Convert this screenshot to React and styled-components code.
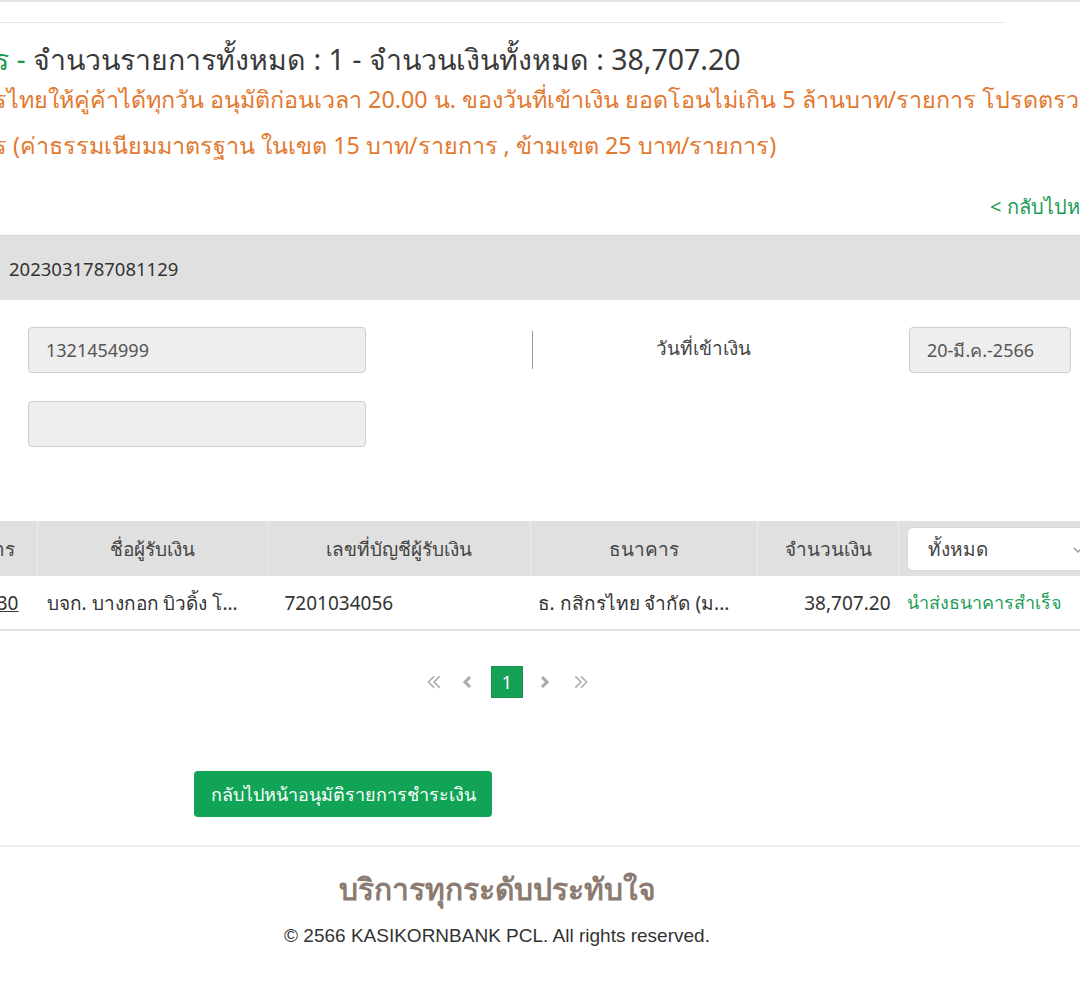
import React from "react";
import styled, { createGlobalStyle } from "styled-components";

const GlobalStyle = createGlobalStyle`
  html, body {
    margin: 0;
    padding: 0;
    background: #ffffff;
  }
  body {
    font-family: "Noto Sans", "Liberation Sans", sans-serif;
    color: #333333;
  }
`;

const Viewport = styled.div`
  width: 1080px;
  height: 982px;
  overflow: hidden;
  background: #fff;
  display: flex;
  flex-direction: column;
`;

const TopRule = styled.div`
  height: 2px;
  background: #e4e4e4;
  flex-shrink: 0;
`;

const HeaderRule = styled.div`
  width: 1005px;
  height: 1px;
  margin-top: 20px;
  background: #e6e6e6;
  flex-shrink: 0;
`;

const Title = styled.h1`
  margin: 19px 0 0 -6px;
  font-size: 28.5px;
  font-weight: 400;
  line-height: 34px;
  white-space: nowrap;
  color: #3a3a3a;
`;

const Green = styled.span`
  color: #1d9c56;
`;

const Notice = styled.p`
  margin: 0 0 0 -6px;
  font-size: 23.3px;
  font-weight: 400;
  line-height: 46px;
  white-space: nowrap;
  color: #e2792f;
`;

const BackLink = styled.a`
  display: block;
  margin: 25px 0 0 990px;
  font-size: 20px;
  line-height: 28px;
  color: #1d9c56;
  white-space: nowrap;
  text-decoration: none;
`;

const RefBar = styled.div`
  margin-top: 14px;
  height: 64px;
  display: flex;
  align-items: center;
  padding-left: 9px;
  background: #e0e0e0;
  border-top: 1px solid #d6d6d6;
  font-size: 18.5px;
  color: #333;
  flex-shrink: 0;
`;

const FormGrid = styled.div`
  margin-top: 27px;
  display: grid;
  grid-template-columns: 28px 338px 166px 1px 376px 162px;
  grid-auto-rows: 46px;
  row-gap: 28px;
  align-items: center;
`;

const Field = styled.div`
  grid-column: ${(p) => p.$col};
  height: 46px;
  box-sizing: border-box;
  display: flex;
  align-items: center;
  padding-left: 17px;
  background: #eeeeee;
  border: 1px solid #cfcfcf;
  border-radius: 4px;
  font-size: 18px;
  color: #555;
  white-space: nowrap;
`;

const Divider = styled.div`
  grid-column: 4;
  height: 38px;
  background: #9a9a9a;
`;

const FieldLabel = styled.div`
  grid-column: 5;
  padding-right: 36px;
  text-align: center;
  font-size: 19px;
  font-weight: 400;
  color: #444;
  margin-top: -4px;
`;

const Table = styled.table`
  margin: 74px 0 0 -60px;
  border-collapse: collapse;
  table-layout: fixed;
  width: 1220px;
  font-size: 19px;
`;

const HeadCell = styled.th`
  height: 55px;
  padding: ${(p) => p.$pad || "0 8px"};
  background: #e0e0e0;
  font-weight: 400;
  color: #444;
  text-align: ${(p) => p.$align || "center"};
  border-left: 1px solid ${(p) => (p.$first ? "transparent" : "#ebebeb")};
  white-space: nowrap;
  overflow: hidden;
`;

const Cell = styled.td`
  height: 53px;
  padding: ${(p) => p.$pad || "0 8px"};
  border-bottom: 2px solid #e3e3e3;
  text-align: ${(p) => p.$align || "left"};
  font-size: ${(p) => (p.$green ? "18px" : "inherit")};
  color: ${(p) => (p.$green ? "#1d9c56" : "#333")};
  white-space: nowrap;
  overflow: hidden;
`;

const RowLink = styled.a`
  color: #333;
  text-decoration: underline;
`;

const Select = styled.div`
  height: 44px;
  box-sizing: border-box;
  display: flex;
  align-items: center;
  justify-content: space-between;
  padding: 0 12px 0 20px;
  background: #fff;
  border: 1px solid #d8d8d8;
  border-radius: 6px;
  color: #444;
  text-align: left;
`;

const Pager = styled.nav`
  margin-top: 35px;
  display: flex;
  align-items: center;
  padding-left: 423px;
`;

const PageArrow = styled.span`
  width: ${(p) => p.$w}px;
  height: 32px;
  display: flex;
  align-items: center;
  justify-content: center;
  color: #aaaaaa;
`;

const PageCurrent = styled.span`
  width: 32px;
  height: 32px;
  box-sizing: border-box;
  display: flex;
  align-items: center;
  justify-content: center;
  background: #15a257;
  border: 1px solid #1a8f4d;
  color: #fff;
  font-size: 18px;
`;

const ActionButton = styled.button`
  margin: 73px 0 0 194px;
  width: 298px;
  height: 46px;
  border: none;
  border-radius: 4px;
  background: #12a456;
  color: #fff;
  font-family: inherit;
  font-size: 18px;
  cursor: pointer;
  align-self: flex-start;
`;

const FooterRule = styled.div`
  margin-top: 28px;
  height: 2px;
  background: #eeeeee;
  flex-shrink: 0;
`;

const Footer = styled.footer`
  width: 994px;
  display: flex;
  flex-direction: column;
  align-items: center;
`;

const Slogan = styled.div`
  margin-top: 21px;
  font-size: 30px;
  font-weight: 700;
  line-height: 42px;
  color: #8b7b71;
`;

const Copyright = styled.div`
  margin-top: 15px;
  font-family: "Liberation Sans", Arial, sans-serif;
  font-size: 19px;
  color: #333;
`;

const Chevron = ({ dir = "left", double = false }) => {
  if (double) {
    const d =
      dir === "left"
        ? "M8 3 L3 8 L8 13 M13 3 L8 8 L13 13"
        : "M3 3 L8 8 L3 13 M8 3 L13 8 L8 13";
    return (
      <svg width="18" height="18" viewBox="0 0 16 16" fill="none" stroke="currentColor" strokeWidth="1.3">
        <path d={d} />
      </svg>
    );
  }
  const single = dir === "left" ? "M10 3 L5 8 L10 13" : "M6 3 L11 8 L6 13";
  return (
    <svg width="16" height="20" viewBox="0 0 16 16" fill="none" stroke="currentColor" strokeWidth="3">
      <path d={single} />
    </svg>
  );
};

const Caret = () => (
  <svg width="12" height="12" viewBox="0 0 12 12" fill="none" stroke="#999" strokeWidth="1.5">
    <path d="M2 4 L6 8 L10 4" />
  </svg>
);

export default function App() {
  return (
    <Viewport>
      <GlobalStyle />
      <TopRule />
      <HeaderRule />
      <Title>
        <Green>ร - </Green>จำนวนรายการทั้งหมด : 1 - จำนวนเงินทั้งหมด : 38,707.20
      </Title>
      <Notice>
        รไทยให้คู่ค้าได้ทุกวัน อนุมัติก่อนเวลา 20.00 น. ของวันที่เข้าเงิน ยอดโอนไม่เกิน 5 ล้านบาท/รายการ โปรดตรวจสอบ
      </Notice>
      <Notice>ร (ค่าธรรมเนียมมาตรฐาน ในเขต 15 บาท/รายการ , ข้ามเขต 25 บาท/รายการ)</Notice>
      <BackLink href="#">&lt; กลับไปหน้าก่อนหน้า</BackLink>
      <RefBar>2023031787081129</RefBar>
      <FormGrid>
        <Field $col={2}>1321454999</Field>
        <Divider />
        <FieldLabel>วันที่เข้าเงิน</FieldLabel>
        <Field $col={6}>20-มี.ค.-2566</Field>
        <Field $col={2} />
      </FormGrid>
      <Table>
        <colgroup>
          <col style={{ width: 97 }} />
          <col style={{ width: 230 }} />
          <col style={{ width: 263 }} />
          <col style={{ width: 227 }} />
          <col style={{ width: 141 }} />
          <col style={{ width: 262 }} />
        </colgroup>
        <thead>
          <tr>
            <HeadCell $first $align="right" $pad="0 22px 0 0">รายการ</HeadCell>
            <HeadCell>ชื่อผู้รับเงิน</HeadCell>
            <HeadCell>เลขที่บัญชีผู้รับเงิน</HeadCell>
            <HeadCell>ธนาคาร</HeadCell>
            <HeadCell $align="right" $pad="0 26px 0 0">จำนวนเงิน</HeadCell>
            <HeadCell>
              <Select>
                <span>ทั้งหมด</span>
                <span style={{ marginRight: 56 }}>
                  <Caret />
                </span>
              </Select>
            </HeadCell>
          </tr>
        </thead>
        <tbody>
          <tr>
            <Cell $align="right" $pad="0 19px 0 0">
              <RowLink href="#">0030</RowLink>
            </Cell>
            <Cell $pad="0 8px 0 9px">บจก. บางกอก บิวดิ้ง โ...</Cell>
            <Cell $pad="0 8px 0 17px">7201034056</Cell>
            <Cell $pad="0 8px 0 7px">ธ. กสิกรไทย จำกัด (ม...</Cell>
            <Cell $align="right">38,707.20</Cell>
            <Cell $green>นำส่งธนาคารสำเร็จ</Cell>
          </tr>
        </tbody>
      </Table>
      <Pager>
        <PageArrow $w={22}>
          <Chevron dir="left" double />
        </PageArrow>
        <PageArrow $w={46}>
          <Chevron dir="left" />
        </PageArrow>
        <PageCurrent>1</PageCurrent>
        <PageArrow $w={42}>
          <Chevron dir="right" />
        </PageArrow>
        <PageArrow $w={32}>
          <Chevron dir="right" double />
        </PageArrow>
      </Pager>
      <ActionButton>กลับไปหน้าอนุมัติรายการชำระเงิน</ActionButton>
      <FooterRule />
      <Footer>
        <Slogan>บริการทุกระดับประทับใจ</Slogan>
        <Copyright>© 2566 KASIKORNBANK PCL. All rights reserved.</Copyright>
      </Footer>
    </Viewport>
  );
}
